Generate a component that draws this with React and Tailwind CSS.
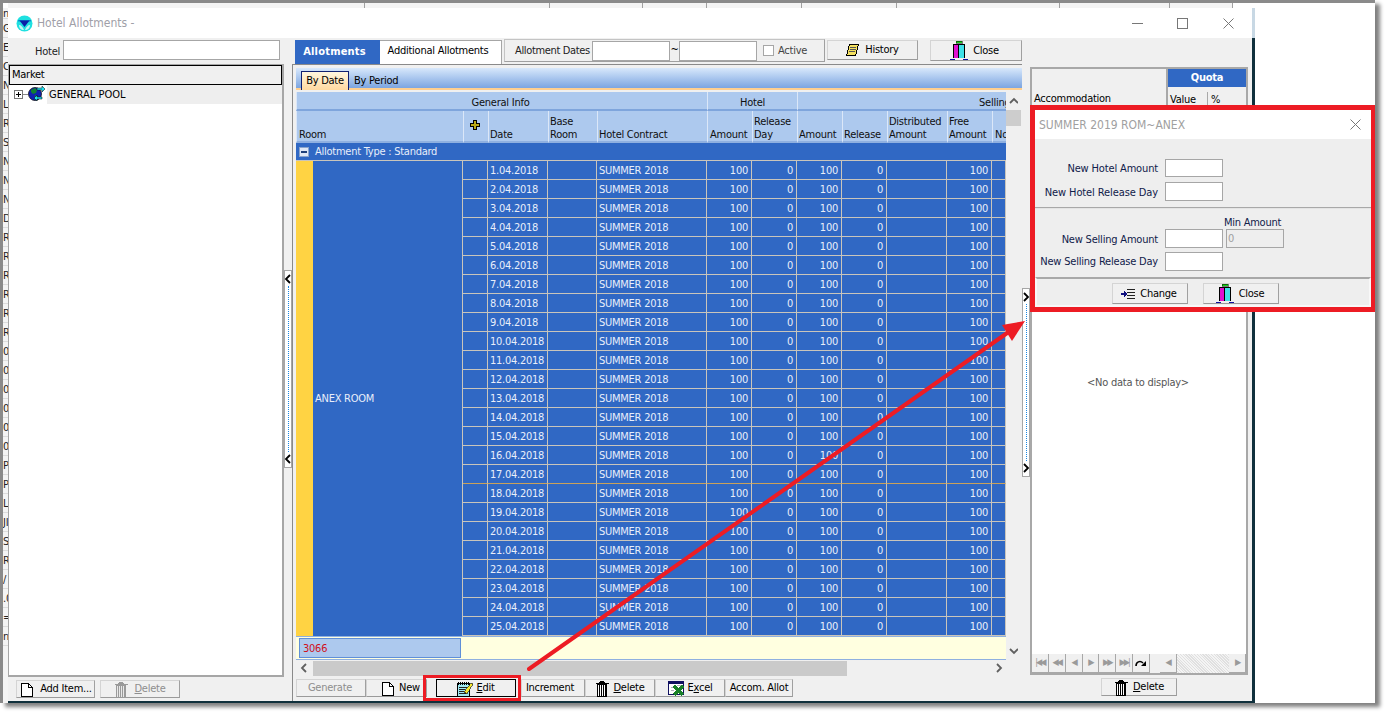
import React from "react";

const FONT = "font-['DejaVu_Sans_Condensed','DejaVu_Sans','Liberation_Sans',sans-serif]";

const dates = Array.from({ length: 25 }, (_, i) => `${i + 1}.04.2018`);
const edgeLetters = ["G", "E", "C", "N", "L", "R", "S", "N", "N", "N", "D", "R", "R", "R", "R", "R", "R", "01", "01", "01", "0Y", "0Y", "02", "PH", "PH", "L", "JI", "S", "R", "/", ".0", "=", "n"];
const backHeaders = ["w-[357px]", "w-[185px]", "w-[93px]", "w-[64px]", "w-[95px]", "w-[95px]", "w-[163px]", "w-[110px]", "w-[63px]"];

function FileIcon() {
  return (
    <svg width="12" height="14" viewBox="0 0 12 14" shapeRendering="crispEdges">
      <path d="M.5.5h7l4 4v9H.5z" fill="#fff" stroke="#000" />
      <path d="M7.5.5v4h4" fill="none" stroke="#000" />
    </svg>
  );
}

function TrashIcon({ off }) {
  const c = off ? "#9a9a9a" : "#000";
  return (
    <svg width="14" height="16" viewBox="0 0 14 16" shapeRendering="crispEdges">
      <path d="M5 .5h4M.5 2.5h13" stroke={c} fill="none" />
      <rect x="4" y="1" width="6" height="1" fill={c} />
      <path d="M2.5 3.5h9v12h-9z" fill={off ? "#e8e8e8" : "#fff"} stroke={c} />
      <path d="M4.5 4v11M6.5 4v11M8.5 4v11M10.5 4v11" stroke={c} />
    </svg>
  );
}

function CloseIcon() {
  return (
    <svg width="18" height="20" viewBox="0 0 18 20" shapeRendering="crispEdges">
      <rect x="6" y="0" width="6" height="2" fill="#18d018" stroke="#000" strokeWidth="0.5" />
      <rect x="4" y="3" width="5" height="14" fill="#e010d0" />
      <rect x="9" y="3" width="5" height="14" fill="#40e0e8" />
      <path d="M3.5 17V3.5h11V17M8.5 4v13" fill="none" stroke="#000" />
      <path d="M0 18.5h5M13 18.5h5" stroke="#1010a0" />
    </svg>
  );
}

function HistoryIcon() {
  return (
    <svg width="13" height="13" viewBox="0 0 13 13" shapeRendering="crispEdges">
      <path d="M3.5.5h9l-3 11h-9z" fill="#f4e060" stroke="#000" />
      <path d="M4 3.5h6M3.5 5.5h6M3 7.5h6" stroke="#555" />
    </svg>
  );
}

function EditIcon() {
  return (
    <svg width="17" height="16" viewBox="0 0 17 16" shapeRendering="crispEdges">
      <rect x="1.5" y="2.5" width="12" height="13" fill="#9fe8f0" stroke="#000" />
      <path d="M2 .5v3M4 .5v3M6 .5v3M8 .5v3M10 .5v3M12 .5v3" stroke="#000" />
      <path d="M3 6.5h8M3 8.5h6M3 10.5h5M3 12.5h7" stroke="#222" />
      <path d="M8 11 15 2l2 1-6 10z" fill="#f6e830" stroke="#000" strokeWidth="0.6" />
    </svg>
  );
}

function ExcelIcon() {
  return (
    <svg width="16" height="15" viewBox="0 0 16 15" shapeRendering="crispEdges">
      <rect x="0.5" y="0.5" width="15" height="13" fill="#fff" stroke="#101060" />
      <rect x="0" y="0" width="16" height="3" fill="#101060" />
      <path d="M3 6h4M3 9h3M9 4.5h4" stroke="#b0b0c0" />
      <path d="M6 5l9 9M15 5l-9 9" stroke="#188028" strokeWidth="3" />
    </svg>
  );
}

function ChangeIcon() {
  return (
    <svg width="14" height="11" viewBox="0 0 14 11" shapeRendering="crispEdges">
      <path d="M6 .5h8M6 3.5h8M6 6.5h8M6 9.5h8" stroke="#222" />
      <path d="M0 5h4" stroke="#101080" strokeWidth="2" />
      <path d="M3 2h1v6H3zM4 3h1v4H4zM5 4h1v2H5z" fill="#101080" />
    </svg>
  );
}

function GlobeIcon() {
  return (
    <svg width="17" height="17" viewBox="0 0 17 17">
      <circle cx="7" cy="8" r="6.5" fill="#1020b0" stroke="#000" strokeWidth="0.7" />
      <path d="M3 4l4-2 2 2-1 3-3 1-2-2zM7 9l3 1-1 4-2-1z" fill="#108030" />
      <path d="M9 2h5V0l3 3-3 3V4H9z" fill="#20e0f0" stroke="#000" strokeWidth="0.5" />
      <path d="M14 11H9V9l-3 3 3 3v-2h5z" fill="#20e0f0" stroke="#000" strokeWidth="0.5" />
    </svg>
  );
}

function Logo() {
  return (
    <svg width="17" height="17" viewBox="0 0 17 17">
      <circle cx="8.5" cy="8.5" r="8" fill="#1fe0e0" />
      <path d="M2 5h13v1.5H2z" fill="#0a8fd0" />
      <path d="M3.5 5.5h10L8.5 12z" fill="#0c1fa8" />
      <path d="M3 10c2 0 4 2 5 5-3 0-5-2-5-5zM14 10c-2 0-4 2-5 5 3 0 5-2 5-5z" fill="#fff" opacity="0.75" />
    </svg>
  );
}

function Chevron({ dir, gray }) {
  const d = { left: "M6 1 2 5l4 4", right: "M2 1l4 4-4 4", up: "M1 6l4-4 4 4", down: "M1 3l4 4 4-4" }[dir];
  return (
    <svg width="9" height="10" viewBox="0 0 9 10">
      <path d={d} fill="none" stroke={gray ? "#606060" : "#000"} strokeWidth="1.8" />
    </svg>
  );
}

function Btn({ className = "", children, off }) {
  return (
    <div className={`flex items-center justify-center gap-1 pt-px whitespace-nowrap bg-[#f0f0f0] border border-[#d4d4d4] border-r-[#a0a0a0] border-b-[#9a9a9a] ${off ? "text-[#8e8e8e]" : "text-black"} ${className}`}>
      {children}
    </div>
  );
}

function Field({ className = "" }) {
  return <div className={`bg-white border border-[#a6a6a6] ${className}`} />;
}

function Splitter({ dir, className = "" }) {
  return (
    <div className={`w-[8px] flex flex-col items-center justify-between bg-white border border-[#a6a6a6] py-[3px] ${className}`}>
      <Chevron dir={dir} />
      <div className="flex-1 my-[2px] border-l border-dotted border-[#1a86e0]" />
      <Chevron dir={dir} />
    </div>
  );
}

function Row({ date, last }) {
  const line = last ? "border-b-[#c9a15a]" : "border-b-[#c9c5bb]";
  const cell = `h-[19px] leading-[20px] border-r border-b border-r-[#c9c5bb] ${line} px-[3px] overflow-hidden whitespace-nowrap`;
  return (
    <div className="flex text-[#e8eefa]">
      <div className={`${cell} w-[25px]`} />
      <div className={`${cell} w-[60px] !pl-[2px]`}>{date}</div>
      <div className={`${cell} w-[49px]`} />
      <div className={`${cell} w-[110px] !pl-[2px]`}>SUMMER 2018</div>
      <div className={`${cell} w-[45px] text-right`}>100</div>
      <div className={`${cell} w-[45px] text-right`}>0</div>
      <div className={`${cell} w-[45px] text-right`}>100</div>
      <div className={`${cell} w-[45px] text-right`}>0</div>
      <div className={`${cell} w-[60px]`} />
      <div className={`${cell} w-[45px] text-right`}>100</div>
      <div className={`${cell} w-[14px]`} />
    </div>
  );
}

function Grid() {
  const head = "h-[32px] flex flex-col justify-end pl-[2px] leading-[13px] border-l border-[#dbe7f8] border-b-2 border-b-[#8fb0e0] overflow-hidden";
  const band = "h-[19px] flex items-center justify-center pt-[5px] border-l border-[#dbe7f8] border-b-2 border-b-[#7fa5dc]";
  return (
    <div className="w-[710px] flex flex-col overflow-hidden">
      <div className="flex bg-[#adc9ee] text-[#101010]">
        <div className={`${band} w-[411px] pr-[3px]`}>General Info</div>
        <div className={`${band} w-[90px]`}>Hotel</div>
        <div className={`${band} w-[209px] !justify-start pl-[181px] overflow-hidden whitespace-nowrap`}>Selling</div>
      </div>
      <div className="flex bg-[#adc9ee] text-[#101010]">
        <div className={`${head} w-[167px]`}>Room</div>
        <div className={`${head} w-[25px] !justify-center items-center !pl-0 pr-[4px] pb-[3px]`}>
          <svg width="11" height="11" viewBox="0 0 11 11" shapeRendering="crispEdges">
            <path d="M4 1h3v3h3v3H7v3H4V7H1V4h3z" fill="#b8a818" stroke="#000" />
          </svg>
        </div>
        <div className={`${head} w-[60px] !pl-px`}>Date</div>
        <div className={`${head} w-[49px] !pl-px`}><span>Base</span><span>Room</span></div>
        <div className={`${head} w-[110px] !pl-px`}>Hotel Contract</div>
        <div className={`${head} w-[45px]`}>Amount</div>
        <div className={`${head} w-[45px] !pl-px`}><span>Release</span><span>Day</span></div>
        <div className={`${head} w-[45px] !pl-px`}>Amount</div>
        <div className={`${head} w-[45px] !pl-px`}>Release</div>
        <div className={`${head} w-[60px] !pl-px`}><span>Distributed</span><span>Amount</span></div>
        <div className={`${head} w-[45px] !pl-px`}><span>Free</span><span>Amount</span></div>
        <div className={`${head} w-[14px]`}>No</div>
      </div>
      <div className="h-[18px] bg-[#3068c4] flex items-center pl-[3px] pt-[1px] gap-[6px] text-[#e8eefa] border-b border-[#c9c5bb]">
        <div className="w-[10px] h-[10px] bg-[#dfe8f6] border border-[#8aa4cc] flex items-center justify-center">
          <div className="w-[6px] h-[2px] bg-[#1d3f7a]" />
        </div>
        <span className="pt-[1px]">Allotment Type : Standard</span>
      </div>
      <div className="flex bg-[#3068c4]">
        <div className="w-[17px] bg-[#ffd343]" />
        <div className="w-[150px] flex items-center pl-[2px] pt-[2px] text-[#e8eefa] border-r border-[#c9c5bb]">ANEX ROOM</div>
        <div className="flex flex-col">
          {dates.map((d, i) => <Row key={d} date={d} last={i === 16} />)}
        </div>
      </div>
      <div className="h-[24px] bg-[#ffffe0] border-y border-[#8fb0e0] flex items-center pl-[3px]">
        <div className="w-[162px] h-[20px] bg-[#adc9ee] border border-[#5f8fd8] pl-[3px] leading-[20px] text-[#d01020]">3066</div>
      </div>
      <div className="h-[16px] flex items-center">
        <div className="w-[17px] flex justify-center"><Chevron dir="left" gray /></div>
        <div className="w-[534px] h-[15px] bg-[#cacaca]" />
        <div className="flex-1 flex justify-end pr-[2px]"><Chevron dir="right" gray /></div>
      </div>
    </div>
  );
}

function NavBtn({ children }) {
  return <div className="w-[17px] h-[19px] flex items-center justify-center bg-[#f0f0f0] border-r border-b border-[#a8a8a8] text-[9px] text-[#9a9a9a] tracking-[-2px]">{children}</div>;
}

function Quota() {
  return (
    <div className="w-[218px] flex flex-col">
      <div className="h-[608px] mt-[3px] flex flex-col border-2 border-[#a8a8a8] bg-white">
        <div className="flex h-[37px] bg-[#f0f0f0]">
          <div className="w-[136px] border-r-2 border-[#a8a8a8] flex items-end pl-[2px] leading-[14px]">Accommodation</div>
          <div className="flex-1 flex flex-col">
            <div className="h-[18px] bg-[#3068c4] text-white font-bold flex items-center justify-center pt-px">Quota</div>
            <div className="flex-1 flex items-center pt-[5px]">
              <span className="w-[40px] pl-[2px] border-r border-[#a8a8a8]">Value</span>
              <span className="pl-[3px]">%</span>
            </div>
          </div>
        </div>
        <div className="flex-1 flex items-center justify-center pt-[6px] pr-[2px] text-[#555]">&lt;No data to display&gt;</div>
        <div className="h-[19px] flex bg-[#f0f0f0]">
          <NavBtn>|◀◀</NavBtn>
          <NavBtn>◀◀</NavBtn>
          <NavBtn>◀</NavBtn>
          <NavBtn>▶</NavBtn>
          <NavBtn>▶▶</NavBtn>
          <NavBtn>▶▶|</NavBtn>
          <div className="w-[17px] h-[19px] flex items-center justify-center border-r border-b border-[#a8a8a8]">
            <svg width="11" height="8" viewBox="0 0 11 8">
              <path d="M1 7c0-4 4-6 7-3" fill="none" stroke="#000" strokeWidth="1.6" />
              <path d="M6 7h5V2z" fill="#000" />
            </svg>
          </div>
          <div className="w-[10px]" />
          <NavBtn>◀</NavBtn>
          <div className="w-[53px] bg-[repeating-linear-gradient(45deg,#f4f4f4_0,#f4f4f4_1px,#e0e0e0_1px,#e0e0e0_2px)]" />
          <NavBtn>▶</NavBtn>
        </div>
      </div>
      <Btn className="w-[76px] h-[18px] ml-[71px] mt-[3px] !gap-[5px]"><TrashIcon /><span><u>D</u>elete</span></Btn>
    </div>
  );
}

function EditDialog() {
  const label = "w-[123px] text-right text-[#10204a]";
  return (
    <div className="absolute left-[1030px] top-[105px] w-[345px] h-[207px] border-[5px] border-r-[4px] border-[#ed1c24] bg-[#eeeeee] flex flex-col">
      <div className="h-[29px] bg-white flex items-center justify-between pl-[4px] pr-[10px] text-[#a0a0a0] text-[12px] tracking-normal">
        <span>SUMMER 2019 ROM~ANEX</span>
        <svg width="11" height="11" viewBox="0 0 11 11"><path d="M.5.5l10 10M10.5.5l-10 10" stroke="#777" /></svg>
      </div>
      <div className="h-[69px] pt-[20px] flex flex-col gap-[4px] border-b border-[#a8a8a8]">
        <div className="flex items-center gap-[7px]"><span className={`${label} pt-[2px] tracking-[-0.15px]`}>New Hotel Amount</span><Field className="w-[58px] h-[18px]" /></div>
        <div className="flex items-center gap-[7px]"><span className={`${label} pt-[3px] tracking-[-0.1px]`}>New Hotel Release Day</span><Field className="w-[58px] h-[19px]" /></div>
      </div>
      <div className="h-[70px] pt-[7px] flex flex-col gap-[4px] border-t border-[#e4e4e4]">
        <div className="flex items-end gap-[7px]">
          <span className={`${label} tracking-[-0.2px]`}>New Selling Amount</span>
          <Field className="w-[58px] h-[19px]" />
          <div className="flex flex-col -ml-[6px]">
            <span className="leading-[13px] text-[#10204a]">Min Amount</span>
            <div className="w-[58px] h-[19px] ml-[2px] border border-[#a6a6a6] bg-[#eeeeee] text-[#a0a0a0] pl-[1px] leading-[17px]">0</div>
          </div>
        </div>
        <div className="flex items-center gap-[7px]"><span className={`${label} pt-[2px] tracking-[-0.2px]`}>New Selling Release Day</span><Field className="w-[58px] h-[19px]" /></div>
      </div>
      <div className="flex-1 flex items-center justify-center gap-[15px] pt-[3px] pr-[15px] border-2 border-[#a8a8a8] border-l-[#f8f8f8] border-r-[#f8f8f8] border-b-[#f8f8f8] -mt-px">
        <Btn className="w-[76px] h-[21px] !gap-[5px] pr-[2px]"><ChangeIcon /><span>Change</span></Btn>
        <Btn className="w-[76px] h-[21px] !gap-[5px] pr-[2px]"><CloseIcon /><span>Close</span></Btn>
      </div>
    </div>
  );
}

export default function App() {
  return (
    <div className={`relative w-[1386px] h-[716px] bg-white overflow-hidden text-[11px] tracking-[-0.25px] text-black ${FONT}`}>
      <div className="w-[1375px] h-[703px] bg-white border-t-[3px] border-l-[3px] border-[#8a8a8a] shadow-[5px_4px_4px_#808080] flex flex-col">
        {/* app behind the window */}
        <div className="h-[5px] flex pl-[5px] overflow-hidden">
          {backHeaders.map((w, i) => (
            <div key={i} className={`${w} h-[5px] border-r border-[#a0a0a0] bg-[#f4f4f4]`} />
          ))}
        </div>
        <div className="flex-1 flex min-h-0">
          <div className="w-[5px] flex flex-col overflow-hidden bg-[#f4f4f4]">
            <div className="h-[11px] shrink-0 overflow-hidden leading-[11px] text-[#222] border-b border-[#dcdcdc]">n</div>
            {edgeLetters.map((t, i) => (
              <div key={i} className="h-[19px] shrink-0 border-b border-[#dcdcdc] overflow-hidden whitespace-nowrap leading-[19px] text-[#222]">
                {t}
              </div>
            ))}
          </div>

          {/* window */}
          <div className="w-[1247px] h-[695px] flex flex-col bg-[#f0f0f0] border-r-[3px] border-b-2 border-[#10303c]">
            <div className="h-[30px] bg-white shadow-[3px_0_0_#c8d8e4] flex items-center pl-[8px] text-[#a0a0a8] text-[12px] tracking-normal shrink-0">
              <Logo />
              <span className="ml-[4px]">Hotel Allotments -</span>
              <div className="ml-auto flex items-center">
                <svg width="11" height="11" viewBox="0 0 11 11" shapeRendering="crispEdges"><path d="M0 5.5h11" stroke="#777" /></svg>
                <svg className="ml-[34px]" width="11" height="11" viewBox="0 0 11 11" shapeRendering="crispEdges"><rect x=".5" y=".5" width="10" height="10" fill="none" stroke="#777" /></svg>
                <svg className="ml-[35px] mr-[18px]" width="11" height="11" viewBox="0 0 11 11"><path d="M.5.5l10 10M10.5.5l-10 10" stroke="#777" /></svg>
              </div>
            </div>

            <div className="flex-1 flex min-h-0">
              {/* left tree */}
              <div className="w-[276px] flex flex-col shrink-0">
                <div className="h-[26px] flex items-center pr-[4px]">
                  <span className="w-[52px] text-right text-[#222] pt-[2px]">Hotel</span>
                  <Field className="w-[217px] h-[20px] ml-[3px] -mt-[2px]" />
                </div>
                <div className="h-[613px] bg-white border-2 border-l border-t border-[#a6a6a6] flex flex-col">
                  <div className="h-[20px] bg-[#f0f0f0] border border-black flex items-center pl-[2px] pt-px">Market</div>
                  <div className="h-[19px] flex items-center pl-[5px]">
                    <div className="w-[9px] h-[9px] border border-[#777] flex items-center justify-center relative">
                      <div className="w-[5px] h-px bg-black" />
                      <div className="absolute w-px h-[5px] bg-black" />
                    </div>
                    <div className="w-[5px] h-px bg-[#888]" />
                    <GlobeIcon />
                    <div className="flex-1 h-[19px] ml-[2px] pl-[2px] pt-px flex items-center bg-[#eeeeee] tracking-normal">GENERAL POOL</div>
                  </div>
                </div>
                <div className="flex gap-[5px] ml-[8px] mt-[3px]">
                  <Btn className="w-[79px] h-[18px] !gap-[7px] pl-[2px]"><FileIcon /><span>Add Item...</span></Btn>
                  <Btn off className="w-[80px] h-[18px] !gap-[6px]"><TrashIcon off /><span><u>D</u>elete</span></Btn>
                </div>
              </div>

              <Splitter dir="left" className="h-[198px] mt-[232px] shrink-0" />

              {/* right side */}
              <div className="flex-1 flex flex-col min-w-0">
                <div className="h-[26px] flex items-start pl-[3px] shrink-0">
                  <div className="w-[85px] h-[24px] mt-[2px] pt-px pr-[6px] bg-[#3068c4] text-white font-bold tracking-[0.2px] flex items-center justify-center">Allotments</div>
                  <div className="w-[122px] h-[24px] mt-[2px] pr-[5px] bg-white border border-[#a6a6a6] border-l-0 border-b-0 flex items-start justify-center pt-[2px]">Additional Allotments</div>
                  <div className="w-[321px] h-[23px] mt-px ml-[2px] border border-[#c4c4c4] border-b-[#a0a0a0] border-r-[#a0a0a0] flex items-center pl-[10px]">
                    <span className="w-[77px] pt-px whitespace-nowrap tracking-[-0.35px] text-[#222]">Allotment Dates</span>
                    <Field className="w-[78px] h-[20px]" />
                    <span className="w-[9px] text-center">~</span>
                    <Field className="w-[78px] h-[20px]" />
                    <div className="w-[11px] h-[11px] ml-[6px] bg-white border border-[#a6a6a6]" />
                    <span className="ml-[4px] pt-[2px] text-[#444]">Active</span>
                  </div>
                  <Btn className="w-[91px] h-[20px] mt-[2px] ml-[2px] pt-[2px] !gap-[6px]"><HistoryIcon /><span>History</span></Btn>
                  <Btn className="w-[92px] h-[21px] mt-[2px] ml-[12px] pr-[3px] !gap-[5px]"><CloseIcon /><span>Close</span></Btn>
                </div>

                <div className="flex-1 flex min-h-0">
                  <div className="w-[730px] border-l border-t border-[#8a8a8a] pl-[3px] pt-[3px] flex flex-col shrink-0">
                    <div className="h-[22px] flex items-end pl-[5px] border-b-2 border-[#ffcf8f] bg-gradient-to-b from-[#d8e8fb] to-[#7ca5e0]">
                      <div className="w-[48px] h-[19px] -mb-[2px] pt-px flex items-center justify-center border border-b-0 border-[#102070] bg-gradient-to-b from-[#fff6de] to-[#ffd9a0]">By Date</div>
                      <div className="w-[55px] h-[19px] -mb-[2px] pt-px pl-[5px] flex items-center">By Period</div>
                    </div>
                    <div className="flex mt-[2px]">
                      <Grid />
                      <div className="w-[16px] flex flex-col items-center pt-[5px] pr-px">
                        <Chevron dir="up" gray />
                        <div className="w-[15px] h-[16px] bg-[#cdcdcd] mt-[3px]" />
                        <div className="mt-auto mb-[20px]"><Chevron dir="down" gray /></div>
                      </div>
                    </div>
                    <div className="flex mt-[3px] h-[18px]">
                      <Btn off className="w-[70px] pr-[2px]">Generate</Btn>
                      <Btn className="w-[61px] !justify-start pl-[15px] !gap-[5px]"><FileIcon /><span>New</span></Btn>
                      <div className="w-[80px] ml-[9px] flex items-center justify-center gap-[3px] pt-px pr-[1px] bg-[#f0f0f0] border border-black">
                        <EditIcon /><span><u>E</u>dit</span>
                      </div>
                      <Btn className="w-[64px] ml-[5px] pr-[6px]">Increment</Btn>
                      <Btn className="w-[70px]"><TrashIcon /><span><u>D</u>elete</span></Btn>
                      <Btn className="w-[70px]"><ExcelIcon /><span>E<u>x</u>cel</span></Btn>
                      <Btn className="w-[68px]">Accom. Allot</Btn>
                    </div>
                  </div>
                  <Splitter dir="right" className="h-[189px] mt-[224px] shrink-0" />
                  <Quota />
                </div>
              </div>
            </div>
          </div>
          <div className="flex-1 bg-white" />
        </div>
      </div>

      <EditDialog />

      {/* red annotations */}
      <div className="absolute left-[423px] top-[675px] w-[98px] h-[26px] border-[3px] border-[#ed1c24]" />
      <svg className="absolute left-0 top-0 pointer-events-none" width="1386" height="716" viewBox="0 0 1386 716">
        <path d="M529 669 1010 331" stroke="#ed1c24" strokeWidth="4" strokeLinecap="round" />
        <path d="M1025 321 1002 325 1012 341z" fill="#ed1c24" />
      </svg>
    </div>
  );
}
